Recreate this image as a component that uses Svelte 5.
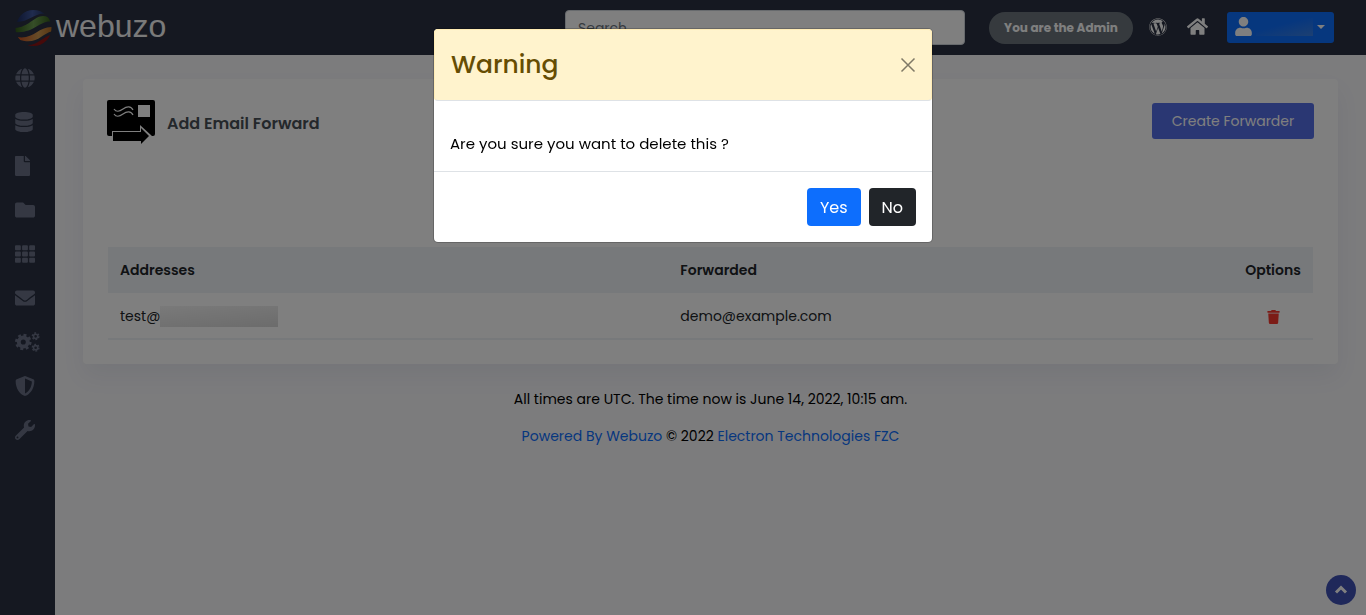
<script lang="ts">
	type Icon = { label: string; box: string; width: number; height: number; path: string };

	let search = '';
	let showModal = true;

	const menu: Icon[] = [
		{
			label: 'Domains',
			box: '0 0 496 512',
			width: 20,
			height: 20,
			path: 'M336.5 160C322 70.7 287.8 8 248 8s-74 62.7-88.5 152h177zM152 256c0 22.2 1.2 43.5 3.3 64h185.3c2.1-20.5 3.3-41.8 3.3-64s-1.2-43.5-3.3-64H155.3c-2.1 20.5-3.3 41.8-3.3 64zm324.7-96c-28.6-67.9-86.5-120.4-158-141.6 24.4 33.8 41.2 84.7 50 141.6h108zM177.2 18.4C105.8 39.6 47.8 92.1 19.3 160h108c8.7-56.9 25.5-107.8 49.9-141.6zM487.4 192H372.7c2.1 21 3.3 42.5 3.3 64s-1.2 43-3.3 64h114.6c5.5-20.5 8.6-41.8 8.6-64s-3.1-43.5-8.5-64zM120 256c0-21.5 1.2-43 3.3-64H8.6C3.2 212.5 0 233.8 0 256s3.2 43.5 8.6 64h114.6c-2-21-3.2-42.5-3.2-64zm39.5 96c14.5 89.3 48.7 152 88.5 152s74-62.7 88.5-152h-177zm159.3 141.6c71.4-21.2 129.4-73.7 158-141.6h-108c-8.8 56.9-25.6 107.8-50 141.6zM19.3 352c28.6 67.9 86.5 120.4 158 141.6-24.4-33.8-41.2-84.7-50-141.6h-108z'
		},
		{
			label: 'Databases',
			box: '0 0 448 512',
			width: 18,
			height: 20,
			path: 'M448 73.143v45.714C448 159.143 347.667 192 224 192S0 159.143 0 118.857V73.143C0 32.857 100.333 0 224 0s224 32.857 224 73.143zM448 176v102.857C448 319.143 347.667 352 224 352S0 319.143 0 278.857V176c48.125 33.143 136.208 48.572 224 48.572S399.874 209.143 448 176zm0 160v102.857C448 479.143 347.667 512 224 512S0 479.143 0 438.857V336c48.125 33.143 136.208 48.572 224 48.572S399.874 369.143 448 336z'
		},
		{
			label: 'Files',
			box: '0 0 384 512',
			width: 15,
			height: 20,
			path: 'M224 136V0H24C10.7 0 0 10.7 0 24v464c0 13.3 10.7 24 24 24h336c13.3 0 24-10.7 24-24V160H248c-13.2 0-24-10.8-24-24zm160-14.1v6.1H256V0h6.1c6.4 0 12.5 2.5 17 7l97.9 98c4.5 4.5 7 10.6 7 16.9z'
		},
		{
			label: 'FTP',
			box: '0 0 512 512',
			width: 20,
			height: 20,
			path: 'M464 128H272l-64-64H48C21.49 64 0 85.49 0 112v288c0 26.51 21.49 48 48 48h416c26.51 0 48-21.49 48-48V176c0-26.51-21.49-48-48-48z'
		},
		{
			label: 'Apps',
			box: '0 0 512 512',
			width: 20,
			height: 20,
			path: 'M24 32h101a24 24 0 0 1 24 24v80a24 24 0 0 1-24 24H24a24 24 0 0 1-24-24V56a24 24 0 0 1 24-24zm181 0h101a24 24 0 0 1 24 24v80a24 24 0 0 1-24 24H205a24 24 0 0 1-24-24V56a24 24 0 0 1 24-24zm182 0h101a24 24 0 0 1 24 24v80a24 24 0 0 1-24 24H387a24 24 0 0 1-24-24V56a24 24 0 0 1 24-24zM24 192h101a24 24 0 0 1 24 24v80a24 24 0 0 1-24 24H24a24 24 0 0 1-24-24v-80a24 24 0 0 1 24-24zm181 0h101a24 24 0 0 1 24 24v80a24 24 0 0 1-24 24H205a24 24 0 0 1-24-24v-80a24 24 0 0 1 24-24zm182 0h101a24 24 0 0 1 24 24v80a24 24 0 0 1-24 24H387a24 24 0 0 1-24-24v-80a24 24 0 0 1 24-24zM24 352h101a24 24 0 0 1 24 24v80a24 24 0 0 1-24 24H24a24 24 0 0 1-24-24v-80a24 24 0 0 1 24-24zm181 0h101a24 24 0 0 1 24 24v80a24 24 0 0 1-24 24H205a24 24 0 0 1-24-24v-80a24 24 0 0 1 24-24zm182 0h101a24 24 0 0 1 24 24v80a24 24 0 0 1-24 24H387a24 24 0 0 1-24-24v-80a24 24 0 0 1 24-24z'
		},
		{
			label: 'Email',
			box: '0 0 512 512',
			width: 20,
			height: 20,
			path: 'M502.3 190.8c3.9-3.1 9.7-.2 9.7 4.7V400c0 26.5-21.5 48-48 48H48c-26.5 0-48-21.5-48-48V195.6c0-5 5.7-7.8 9.7-4.7 22.4 17.4 52.1 39.5 154.1 113.6 21.1 15.4 56.7 47.8 92.2 47.6 35.7.3 72-32.8 92.3-47.6 102-74.1 131.6-96.3 154-113.7zM256 320c23.2.4 56.6-29.2 73.4-41.4 132.7-96.3 142.8-104.7 173.4-128.7 5.8-4.5 9.2-11.5 9.2-18.9v-19c0-26.5-21.5-48-48-48H48c-26.5 0-48 21.5-48 48v19c0 7.4 3.4 14.3 9.2 18.9 30.6 23.9 40.7 32.4 173.4 128.7 16.8 12.2 50.2 41.8 73.4 41.4z'
		},
		{ label: 'Configuration', box: '0 0 640 512', width: 25, height: 20, path: '' },
		{
			label: 'Security',
			box: '0 0 512 512',
			width: 20,
			height: 20,
			path: 'M466.5 83.7l-192-80a48.15 48.15 0 0 0-36.9 0l-192 80C27.7 91.1 16 108.6 16 128c0 198.5 114.5 335.7 221.5 380.3 11.8 4.9 25.1 4.9 36.9 0C360.1 472.6 496 349.3 496 128c0-19.4-11.7-36.9-29.5-44.3zM256.1 446.3l-.1-381 175.9 73.3c-3.3 151.4-82.1 261.1-175.8 307.7z'
		},
		{
			label: 'Server Utilities',
			box: '0 0 512 512',
			width: 20,
			height: 20,
			path: 'M507.73 109.1c-2.24-9.03-13.54-12.09-20.12-5.51l-74.36 74.36-67.88-11.31-11.31-67.88 74.36-74.36c6.62-6.62 3.43-17.9-5.66-20.16-47.38-11.74-99.55.91-136.58 37.93-39.64 39.64-50.55 97.1-34.05 147.2L18.74 402.76c-24.99 24.99-24.99 65.51 0 90.5 24.99 24.99 65.51 24.99 90.5 0l213.21-213.21c50.12 16.71 107.47 5.68 147.37-34.22 37.07-37.07 49.7-89.32 37.91-136.73zM64 472c-13.25 0-24-10.75-24-24 0-13.26 10.75-24 24-24s24 10.74 24 24c0 13.25-10.75 24-24 24z'
		}
	];

	let forwarders = [{ user: 'test@', forwarded: 'demo@example.com' }];

	function closeModal() {
		showModal = false;
	}

	function deleteForwarder() {
		forwarders = [];
		closeModal();
	}
</script>

<div class="layout">
	<header class="topbar">
		<a class="brand" href="#home">
			<svg width="39" height="38" viewBox="0 0 39 38" aria-hidden="true">
				<defs>
					<clipPath id="ball"><circle cx="19.500" cy="19" r="18" /></clipPath>
					<linearGradient id="blue" x1="0" x2="1">
						<stop offset="0" stop-color="#1c2c60" />
						<stop offset=".5" stop-color="#40589c" />
						<stop offset="1" stop-color="#1c2850" />
					</linearGradient>
					<linearGradient id="green" x1="0" x2="1">
						<stop offset="0" stop-color="#2c5414" />
						<stop offset=".5" stop-color="#6c9c50" />
						<stop offset="1" stop-color="#2c5414" />
					</linearGradient>
					<linearGradient id="orange" x1="0" x2="1">
						<stop offset="0" stop-color="#c84c1c" />
						<stop offset=".6" stop-color="#cc9850" />
						<stop offset="1" stop-color="#b06820" />
					</linearGradient>
				</defs>
				<g clip-path="url(#ball)">
					<path fill="url(#blue)" d="M3 13C6 4 13 0 20 0s12 3 14 6c-10-5-18 7-31 7z" />
					<path fill="url(#green)" d="M0 19c14 0 20-12 29-12 4 0 7 2 10 6-13-3-18 12-38 10z" />
					<path fill="url(#orange)" d="M3 28c17 3 21-11 36-10v4c-11 2-15 14-33 9z" />
					<path fill="#8c1414" d="M12 36c12 1 17-9 27-11-2 9-14 18-27 11z" />
				</g>
			</svg>
			<span>webuzo</span>
		</a>

		<input class="search" type="search" placeholder="Search" aria-label="Search" bind:value={search} />

		<span class="role">You are the Admin</span>
		<a class="top-link" href="#wordpress" aria-label="WordPress">
			<svg width="18" height="18" viewBox="0 0 512 512">
				<path
					d="M61.7 169.4l101.5 278C92.2 413 43.3 340.2 43.3 256c0-30.9 6.6-60.1 18.4-86.6zm337.9 75.9c0-26.3-9.4-44.5-17.5-58.7-10.8-17.5-20.9-32.4-20.9-49.9 0-19.6 14.8-37.8 35.7-37.8.9 0 1.8.1 2.8.2-37.9-34.7-88.3-55.9-143.7-55.9-74.3 0-139.7 38.1-177.8 95.9 5 .2 9.7.3 13.7.3 22.2 0 56.7-2.7 56.7-2.7 11.5-.7 12.8 16.2 1.4 17.5 0 0-11.5 1.3-24.3 2l77.5 230.4L249.8 247l-33.1-90.8c-11.5-.7-22.3-2-22.3-2-11.5-.7-10.1-18.2 1.3-17.5 0 0 35.1 2.7 56 2.7 22.2 0 56.7-2.7 56.7-2.7 11.5-.7 12.8 16.2 1.4 17.5 0 0-11.5 1.3-24.3 2l76.9 228.7 21.2-70.9c9-29.4 16-50.5 16-68.7zm-139.9 29.3l-63.8 185.5c19.1 5.6 39.2 8.7 60.1 8.7 24.8 0 48.5-4.3 70.6-12.1-.6-.9-1.1-1.9-1.5-2.9l-65.4-179.2zm183-120.7c.9 6.8 1.4 14 1.4 21.9 0 21.6-4 45.8-16.2 76.2l-65 187.9C426.2 403 468.7 334.5 468.7 256c0-37-9.4-71.8-26-102.1zM504 256c0 136.8-111.3 248-248 248C119.2 504 8 392.7 8 256 8 119.2 119.2 8 256 8c136.7 0 248 111.2 248 248zm-11.4 0c0-130.5-106.2-236.6-236.6-236.6C125.5 19.4 19.4 125.5 19.4 256S125.6 492.6 256 492.6c130.5 0 236.6-106.1 236.6-236.6z"
				/>
			</svg>
		</a>
		<a class="top-link home" href="#home" aria-label="Home">
			<svg width="21" height="19" viewBox="0 0 576 512">
				<path
					d="M280.37 148.26L96 300.11V464a16 16 0 0 0 16 16l112.06-.29a16 16 0 0 0 15.92-16V368a16 16 0 0 1 16-16h64a16 16 0 0 1 16 16v95.64a16 16 0 0 0 16 16.05L464 480a16 16 0 0 0 16-16V300L295.67 148.26a12.19 12.19 0 0 0-15.3 0zM571.6 251.47L488 182.56V44.05a12 12 0 0 0-12-12h-56a12 12 0 0 0-12 12v72.61L318.47 43a48 48 0 0 0-61 0L4.34 251.47a12 12 0 0 0-1.6 16.9l25.5 31A12 12 0 0 0 45.15 301l235.22-193.74a12.19 12.19 0 0 1 15.3 0L530.9 301a12 12 0 0 0 16.9-1.6l25.5-31a12 12 0 0 0-1.7-16.93z"
				/>
			</svg>
		</a>
		<button class="user" type="button" aria-label="Account">
			<svg width="17" height="19" viewBox="0 0 448 512">
				<path
					d="M224 256c70.7 0 128-57.3 128-128S294.7 0 224 0 96 57.3 96 128s57.3 128 128 128zm89.6 32h-16.7c-22.2 10.2-46.9 16-72.9 16s-50.6-5.8-72.9-16h-16.7C60.2 288 0 348.2 0 422.4V464c0 26.5 21.5 48 48 48h352c26.5 0 48-21.5 48-48v-41.6c0-74.2-60.2-134.4-134.4-134.4z"
				/>
			</svg>
			<span class="user-name"></span>
			<span class="caret"></span>
		</button>
	</header>

	<nav class="sidebar">
		{#each menu as item}
			<a href="#{item.label}" aria-label={item.label}>
				<svg width={item.width} height={item.height} viewBox={item.box}>
					{#if item.path}
						<path d={item.path} />
					{:else}
						<g class="gears">
							<circle cx="212" cy="256" r="115" stroke-width="100" />
							<circle cx="212" cy="256" r="180" stroke-width="64" stroke-dasharray="75 66.4" />
							<circle cx="528" cy="110" r="54" stroke-width="40" />
							<circle cx="528" cy="110" r="84" stroke-width="36" stroke-dasharray="46 42" />
							<circle cx="528" cy="402" r="54" stroke-width="40" />
							<circle cx="528" cy="402" r="84" stroke-width="36" stroke-dasharray="46 42" />
						</g>
					{/if}
				</svg>
			</a>
		{/each}
	</nav>

	<main>
		<section class="card">
			<div class="card-head">
				<svg width="48" height="48" viewBox="0 0 48 48" aria-hidden="true">
					<rect y="2" width="48" height="36" rx="2" />
					<path fill="#fff" d="M31 7h12v12H31z" />
					<path
						fill="none"
						stroke="#fff"
						stroke-width="1.200"
						d="M7 11c2 3 5 3 9 0s8-3 10 1M7 16c2 3 5 3 9 0s8-3 10 1"
					/>
					<path fill="#fff" d="M5 43V33h28v-6l12 11h-3l-9 8z" />
					<path d="M6 34h28v-4l8 8-8 8v-3H6z" />
				</svg>
				<h1>Add Email Forward</h1>
				<button class="create" type="button">Create Forwarder</button>
			</div>

			<div class="table-wrap">
				<table>
					<colgroup>
						<col class="col-address" />
						<col />
						<col class="col-options" />
					</colgroup>
					<thead>
						<tr>
							<th>Addresses</th>
							<th>Forwarded</th>
							<th class="options">Options</th>
						</tr>
					</thead>
					<tbody>
						{#each forwarders as row}
							<tr>
								<td><div class="address">{row.user}<span class="masked"></span></div></td>
								<td>{row.forwarded}</td>
								<td class="options">
									<button
										class="delete"
										type="button"
										aria-label="Delete"
										on:click={() => (showModal = true)}
									>
										<svg width="13" height="14" viewBox="0 0 448 512">
											<path
												d="M432 32H312l-9.4-18.7A24 24 0 0 0 281.1 0H166.8a23.72 23.72 0 0 0-21.4 13.3L136 32H16A16 16 0 0 0 0 48v32a16 16 0 0 0 16 16h416a16 16 0 0 0 16-16V48a16 16 0 0 0-16-16zM53.2 467a48 48 0 0 0 47.9 45h245.8a48 48 0 0 0 47.9-45L416 128H32z"
											/>
										</svg>
									</button>
								</td>
							</tr>
						{/each}
					</tbody>
				</table>
			</div>
		</section>

		<footer>
			<p>All times are UTC. The time now is June 14, 2022, 10:15 am.</p>
			<p>
				<a href="#webuzo">Powered By Webuzo</a> © 2022 <a href="#electron">Electron Technologies FZC</a>
			</p>
		</footer>
	</main>
</div>

<button class="to-top" type="button" aria-label="Back to top">
	<svg width="14" height="14" viewBox="0 0 14 14">
		<path d="M2 9.500l5-5 5 5" />
	</svg>
</button>

{#if showModal}
	<div class="backdrop">
		<div class="modal" role="dialog" aria-modal="true" aria-labelledby="modal-title">
			<div class="modal-header">
				<h2 id="modal-title">Warning</h2>
				<button class="close" type="button" aria-label="Close" on:click={closeModal}>
					<svg width="16" height="16" viewBox="0 0 16 16">
						<path d="M1.500 1.500l13 13M14.500 1.500l-13 13" />
					</svg>
				</button>
			</div>
			<div class="modal-body">Are you sure you want to delete this ?</div>
			<div class="modal-footer">
				<button class="yes" type="button" on:click={deleteForwarder}>Yes</button>
				<button class="no" type="button" on:click={closeModal}>No</button>
			</div>
		</div>
	</div>
{/if}

<style>
	:global(body) {
		background: #f8f8fb;
	}

	.layout,
	.backdrop {
		font-family: Poppins, Inter, sans-serif;
		font-size: 14px;
		line-height: 21px;
		color: #000;
	}
	.layout {
		display: grid;
		grid-template-columns: 55px 1fr;
		grid-template-rows: 55px 1fr;
		min-height: 100vh;
	}
	* {
		box-sizing: border-box;
	}
	a {
		color: #0d6efd;
		text-decoration: none;
	}
	button,
	input {
		font: inherit;
	}
	button {
		border: 0;
		padding: 0;
		cursor: pointer;
	}
	svg {
		display: block;
		flex: none;
	}

	.topbar {
		grid-column: 1 / -1;
		display: flex;
		align-items: center;
		padding: 0 32px 0 14px;
		background: #2a3042;
	}
	.brand {
		display: flex;
		align-items: center;
		gap: 3px;
		margin-right: auto;
		font-family: 'Liberation Sans', Arial, sans-serif;
		font-size: 32px;
		line-height: 48px;
		color: #f4f4f4;
	}
	.brand span {
		padding-bottom: 4px;
	}
	.search {
		width: 400px;
		height: 35px;
		padding: 2px 12px 0;
		border: 1px solid #ced4da;
		border-radius: 4px;
		background: #fff;
	}
	.search::placeholder {
		color: #6c757d;
	}
	.role {
		margin: 0 16px 0 24px;
		width: 144px;
		border-radius: 16px;
		background: #6c757d;
		color: #fff;
		font-size: 12px;
		font-weight: 700;
		line-height: 32px;
		text-align: center;
	}
	.top-link {
		padding-bottom: 2px;
	}
	.top-link svg,
	.user svg {
		fill: #fff;
	}
	.home {
		margin: 0 19px 0 20px;
	}
	.user {
		display: flex;
		align-items: center;
		gap: 4px;
		height: 31px;
		padding: 0 9px 2px 8px;
		border-radius: 3px;
		background: #0d6efd;
	}
	.user-name {
		width: 57px;
		height: 18px;
		background: linear-gradient(165deg, #0d6efd 40%, #3a80e4);
	}
	.caret {
		border: 4px solid transparent;
		border-top-color: #fff;
		border-bottom: 0;
	}

	.sidebar {
		padding-top: 1px;
		background: #2a3042;
	}
	.sidebar a {
		display: flex;
		align-items: center;
		height: 44px;
		padding-left: 15px;
	}
	.sidebar svg {
		fill: #6a7187;
	}
	.gears {
		fill: none;
		stroke: #6a7187;
	}

	main {
		padding: 24px 28px;
	}
	.card {
		padding: 19px 24px 24px;
		border-radius: 4px;
		background: #fff;
		box-shadow: 0 12px 24px rgba(18, 38, 100, 0.06);
	}
	.card-head {
		display: flex;
		align-items: center;
		gap: 12px;
		margin-bottom: 101px;
	}
	h1 {
		margin: 0 auto 0 0;
		padding-top: 3px;
		font-size: 16px;
		font-weight: 600;
		line-height: 24px;
		color: #495057;
	}
	.create {
		width: 162px;
		height: 36px;
		margin-bottom: 2px;
		border-radius: 3px;
		background: #556ee6;
		color: #fff;
	}

	.table-wrap {
		padding: 0 1px;
	}
	table {
		width: 100%;
		border-collapse: collapse;
		table-layout: fixed;
		color: #212529;
	}
	.col-address {
		width: 560px;
		width: 46.5%;
	}
	.col-options {
		width: 80px;
	}
	th,
	td {
		height: 46px;
		padding: 0 12px;
		text-align: left;
	}
	th {
		background: #eff2f7;
		font-weight: 600;
	}
	td {
		padding-top: 1px;
		border-bottom: 2px solid #eff2f7;
	}
	.options {
		text-align: center;
	}
	.address {
		display: flex;
	}
	.masked {
		width: 118px;
		height: 21px;
		background: linear-gradient(175deg, #f4f4f4, #d8d8d8);
	}
	.delete {
		background: none;
		vertical-align: middle;
	}
	.delete svg {
		fill: #f8392f;
	}

	footer {
		padding-top: 25px;
		text-align: center;
	}
	footer p {
		margin: 0 0 16px;
	}

	.to-top {
		position: fixed;
		right: 10px;
		bottom: 10px;
		display: grid;
		place-items: center;
		width: 30px;
		height: 30px;
		border-radius: 50%;
		background: #3f51b5;
	}
	.to-top path {
		fill: none;
		stroke: #fff;
		stroke-width: 3;
	}

	.backdrop {
		position: fixed;
		inset: 0;
		display: flex;
		justify-content: center;
		align-items: flex-start;
		padding-top: 28px;
		background: rgba(0, 0, 0, 0.5);
		font-size: 16px;
		line-height: 24px;
	}
	.modal {
		width: 500px;
		border: 1px solid rgba(0, 0, 0, 0.2);
		border-radius: 5px;
		background: #fff;
		background-clip: padding-box;
	}
	.modal-header {
		display: flex;
		align-items: center;
		justify-content: space-between;
		height: 72px;
		padding: 0 15px 0 16px;
		border: 1px solid #ffecb5;
		border-bottom-color: #dee2e6;
		border-radius: 4px;
		background: #fff3cd;
	}
	h2 {
		margin: 0;
		font-size: 25px;
		font-weight: 500;
		line-height: 32px;
		color: #664d03;
	}
	.close {
		background: none;
	}
	.close path {
		fill: none;
		stroke: #000;
		stroke-opacity: 0.5;
		stroke-width: 1.500;
	}
	.modal-body {
		padding: 31px 16px 15px;
		font-size: 15px;
	}
	.modal-footer {
		display: flex;
		justify-content: flex-end;
		gap: 8px;
		padding: 16px;
		border-top: 1px solid #dee2e6;
	}
	.yes,
	.no {
		padding: 8px 13px 6px;
		border-radius: 4px;
		color: #fff;
	}
	.yes {
		background: #0d6efd;
	}
	.no {
		background: #212529;
	}
</style>
